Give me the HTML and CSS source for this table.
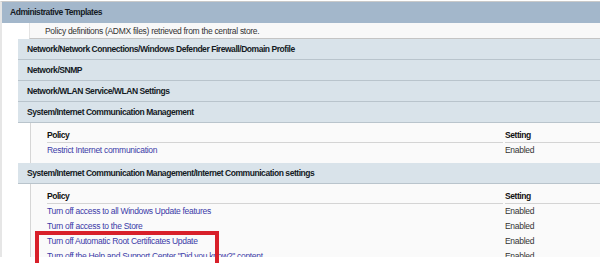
FILE: index.html
```html
<!DOCTYPE html>
<html lang="en">
<head>
<meta charset="UTF-8" />
<title>Group Policy Report</title>
<link rel="stylesheet" href="styles.css">
</head>
<body>

<div class="screen">
  <div class="report">
    <div class="category">Administrative Templates</div>
    <div class="note">Policy definitions (ADMX files) retrieved from the central store.</div>

    <div class="section-title">Network/Network Connections/Windows Defender Firewall/Domain Profile</div>
    <div class="section-title">Network/SNMP</div>
    <div class="section-title">Network/WLAN Service/WLAN Settings</div>
    <div class="section-title">System/Internet Communication Management</div>
    <div class="policies">
      <div class="head">Policy</div>
      <div class="head">Setting</div>
      <div class="policy"><a href="#">Restrict Internet communication</a></div>
      <div class="setting">Enabled</div>
    </div>

    <div class="section-title">System/Internet Communication Management/Internet Communication settings</div>
    <div class="policies">
      <div class="head">Policy</div>
      <div class="head">Setting</div>
      <div class="policy"><a href="#">Turn off access to all Windows Update features</a></div>
      <div class="setting">Enabled</div>
      <div class="policy"><a href="#">Turn off access to the Store</a></div>
      <div class="setting">Enabled</div>
      <div class="policy"><a href="#">Turn off Automatic Root Certificates Update</a></div>
      <div class="setting">Enabled</div>
      <div class="policy"><a href="#">Turn off the Help and Support Center "Did you know?" content</a></div>
      <div class="setting">Enabled</div>
    </div>
  </div>
  <div class="highlight"></div>
</div>

</body>
</html>
```

FILE: styles.css
```css
body {
  margin: 0;
  background: #fff;
  font-family: "Liberation Sans", Arial, sans-serif;
  font-size: 8.5px;
  letter-spacing: -0.3px;
  color: #1c1c1c;
}
.screen {
  position: relative;
  height: 263px;
  overflow: hidden;
}
.report {
  margin-top: 1px;
  height: 255px;
  overflow: hidden;
  border-top: 1px solid #c9c9c9;
  border-left: 2px solid #e6e6e6;
}
.category {
  height: 21px;
  line-height: 21px;
  padding-left: 8px;
  background: #a3b7cb;
  font-weight: bold;
  letter-spacing: -0.45px;
  color: #141a24;
}
.note {
  margin-left: 27px;
  height: 15px;
  line-height: 16px;
  padding-left: 15px;
  background: #f8f8f8;
  border-left: 1px solid #e4e4e4;
  border-bottom: 1px solid #c4c4c4;
  color: #333;
}
.section-title {
  margin-left: 16px;
  height: 20px;
  line-height: 21px;
  padding-left: 9px;
  background: #d9e3ea;
  border-bottom: 1px solid #b9c4cc;
  font-weight: bold;
  letter-spacing: -0.45px;
  color: #141a24;
}
.policies {
  display: grid;
  grid-template-columns: 456px 1fr;
  column-gap: 2px;
  margin-left: 28px;
  padding: 6px 0 5px 16px;
  background: #fafafa;
  border-left: 1px solid #d6d6d6;
}
.head {
  height: 13px;
  line-height: 13px;
  border-bottom: 1px solid #d4d4d4;
  font-weight: bold;
  letter-spacing: -0.45px;
  color: #111;
}
.policy,
.setting {
  line-height: 15px;
  white-space: nowrap;
}
.policy a {
  color: #3b3ba8;
  text-decoration: none;
}
.setting {
  color: #333;
}
.highlight {
  position: absolute;
  left: 35px;
  top: 231px;
  width: 184px;
  height: 40px;
  box-sizing: border-box;
  border: 4px solid #d8202a;
}
```
